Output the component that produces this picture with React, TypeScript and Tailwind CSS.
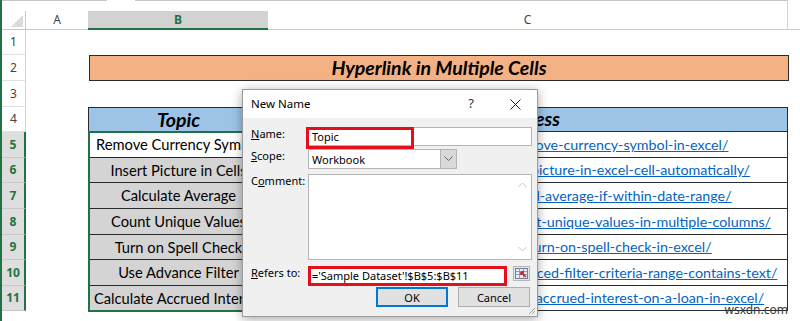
import React from "react";

interface TopicRow {
  n: number;
  topic: string;
  url: string;
  h: string;
}

const topics: TopicRow[] = [
  { n: 5, topic: "Remove Currency Symbol", url: "https://www.exceldemy.com/remove-currency-symbol-in-excel/", h: "h-[26px]" },
  { n: 6, topic: "Insert Picture in Cells", url: "https://www.exceldemy.com/insert-picture-in-excel-cell-automatically/", h: "h-[25px]" },
  { n: 7, topic: "Calculate Average", url: "https://www.exceldemy.com/excel-average-if-within-date-range/", h: "h-[26px]" },
  { n: 8, topic: "Count Unique Values", url: "https://www.exceldemy.com/excel-count-unique-values-in-multiple-columns/", h: "h-[26px]" },
  { n: 9, topic: "Turn on Spell Check", url: "https://www.exceldemy.com/turn-on-spell-check-in-excel/", h: "h-[25px]" },
  { n: 10, topic: "Use Advance Filter", url: "https://www.exceldemy.com/excel-advanced-filter-criteria-range-contains-text/", h: "h-[26px]" },
  { n: 11, topic: "Calculate Accrued Interest", url: "https://www.exceldemy.com/calculate-accrued-interest-on-a-loan-in-excel/", h: "h-[25px]" },
];

function RowHead({ n, active }: { n: number; active?: boolean }) {
  return active ? (
    <div className="w-[24px] shrink-0 flex items-center justify-center bg-[#dedede] border-r-2 border-[#217346] border-b border-b-[#c8c8c8] text-[12px] font-bold text-[#217346] font-['Noto_Sans',sans-serif]">
      {n}
    </div>
  ) : (
    <div className="w-[24px] shrink-0 flex items-center justify-center bg-white border-r border-[#d4d4d4] border-b border-b-[#e1e1e1] text-[12px] text-[#444] font-['Noto_Sans',sans-serif]">
      {n}
    </div>
  );
}

function Sheet() {
  return (
    <div className="flex flex-col flex-1 font-['Lato',sans-serif]">
      {/* formula bar edge */}
      <div className="h-[11px] flex">
        <div className="w-[105px] border-t border-[#c6c6c6]" />
        <div className="w-[28px]" />
        <div className="w-[653px] border-t border-[#c6c6c6] border-r border-r-[#d4d4d4]" />
      </div>

      {/* column headers */}
      <div className="h-[19px] flex text-[12px] font-['Noto_Sans',sans-serif] text-[#444]">
        <div className="w-[24px] relative bg-white border-r border-b border-[#c8c8c8]">
          <svg className="absolute right-[2px] bottom-[2px]" width="12" height="12" viewBox="0 0 12 12">
            <polygon points="12,0 12,12 0,12" fill="#dadada" />
          </svg>
        </div>
        <div className="w-[62px] flex items-center justify-center bg-white border-b border-[#c8c8c8]">A</div>
        <div className="w-[180px] flex items-center justify-center bg-[#d2d2d2] border-b-2 border-[#217346] font-bold text-[#217346]">B</div>
        <div className="w-[520px] flex items-center justify-center bg-white border-b border-[#c8c8c8] border-r border-r-[#d4d4d4]">C</div>
        <div className="flex-1 bg-white border-b border-[#c8c8c8]" />
      </div>

      {/* row 1 */}
      <div className="h-[25px] flex">
        <RowHead n={1} />
      </div>

      {/* row 2 */}
      <div className="h-[26px] flex">
        <RowHead n={2} />
        <div className="w-[63px]" />
        <div className="w-[700px] flex items-center justify-center bg-[#f4b183] border border-[#2a2a2a] text-[19.5px] font-bold italic text-black">
          Hyperlink in Multiple Cells
        </div>
      </div>

      {/* row 3 */}
      <div className="h-[26px] flex">
        <RowHead n={3} />
      </div>

      {/* row 4 */}
      <div className="h-[25px] flex">
        <RowHead n={4} />
        <div className="w-[62px]" />
        <div className="w-[181px] flex items-center justify-center bg-[#9dc3e6] border border-[#2a2a2a] text-[19.5px] font-bold italic text-black">
          Topic
        </div>
        <div className="w-[519px] flex items-center justify-center bg-[#9dc3e6] border-y border-r border-[#2a2a2a] text-[19px] font-bold italic text-black">
          Address
        </div>
      </div>

      {topics.map((r, i) => (
        <div key={r.n} className={`${r.h} flex`}>
          <RowHead n={r.n} active />
          <div className="w-[62px]" />
          <div
            className={`w-[181px] flex items-center justify-center overflow-hidden whitespace-nowrap border-x border-b border-[#2a2a2a] text-[14.7px] text-black ${
              i === 0 ? "bg-white" : "bg-[#d4d4d4]"
            }`}
          >
            {r.topic}
          </div>
          <div className="w-[519px] flex items-center justify-center overflow-hidden whitespace-nowrap bg-white border-r border-b border-[#2a2a2a] text-[14.3px] text-[#0563c1] underline">
            {r.url}
          </div>
        </div>
      ))}
    </div>
  );
}

function NewNameDialog() {
  return (
    <div className="absolute left-[242px] top-[89px] w-[296px] h-[228px] flex flex-col bg-[#f0f0f0] border border-[#9a9a9a] shadow-[0_2px_10px_rgba(0,0,0,0.35)] font-['Noto_Sans',sans-serif] text-[11px] text-black">
      <div className="h-[28px] shrink-0 flex items-center bg-white pl-[8px] pr-[16px]">
        <span className="text-[11.5px]">New Name</span>
        <span className="ml-auto mr-[36px] text-[13px] text-[#333]">?</span>
        <svg width="11" height="11" viewBox="0 0 11 11">
          <path d="M0.5 0.5 L10.5 10.5 M10.5 0.5 L0.5 10.5" stroke="#222" strokeWidth="1" />
        </svg>
      </div>

      <div className="flex-1 relative pl-[8px] pr-[5px] pt-[9px] grid grid-cols-[57px_1fr] auto-rows-min leading-[13px]">
        {/* Name */}
        <div>
          <span className="underline">N</span>ame:
        </div>
        <div className="relative h-[19px] mb-[3px] bg-white border border-[#b5b5b5] flex items-center pl-[3px]">
          Topic
          <div className="absolute left-[-3px] top-[-1px] w-[108px] h-[22px] border-[3px] border-[#e3101c]" />
        </div>

        {/* Scope */}
        <div>
          <span className="underline">S</span>cope:
        </div>
        <div className="w-[149px] h-[20px] mb-[5px] flex bg-white border border-[#b5b5b5]">
          <div className="flex-1 flex items-center pl-[3px]">Workbook</div>
          <div className="w-[16px] flex items-center justify-center bg-[#d9d9d9] border-l border-[#b5b5b5]">
            <svg width="9" height="6" viewBox="0 0 9 6">
              <path d="M0.5 0.5 L4.5 4.5 L8.5 0.5" fill="none" stroke="#666" strokeWidth="1" />
            </svg>
          </div>
        </div>

        {/* Comment */}
        <div>
          C<span className="underline">o</span>mment:
        </div>
        <div className="h-[86px] mb-[6px] flex bg-white border border-[#b5b5b5]">
          <div className="flex-1" />
          <div className="w-[17px] flex flex-col items-center justify-between py-[7px]">
            <svg width="9" height="6" viewBox="0 0 9 6">
              <path d="M0.5 5 L4.5 1 L8.5 5" fill="none" stroke="#c4c4c4" strokeWidth="1" />
            </svg>
            <svg width="9" height="6" viewBox="0 0 9 6">
              <path d="M0.5 1 L4.5 5 L8.5 1" fill="none" stroke="#c4c4c4" strokeWidth="1" />
            </svg>
          </div>
        </div>

        {/* Refers to */}
        <div>
          <span className="underline">R</span>efers to:
        </div>
        <div className="h-[19px] mb-[2px] flex items-start">
          <div className="relative w-[199px] h-[19px] bg-white border border-[#b5b5b5] flex items-center pl-[3px] whitespace-nowrap">
            ='Sample Dataset'!$B$5:$B$11
            <div className="absolute left-[-1px] top-[-1px] w-[199px] h-[20px] border-[3px] border-[#e3101c]" />
          </div>
          <div className="ml-[6px] w-[17px] h-[15px] flex items-center justify-center bg-[#e6e6e6] border border-[#b5b5b5]">
            <svg width="13" height="11" viewBox="0 0 13 11">
              <rect x="0.5" y="0.5" width="12" height="10" fill="#e8eef6" stroke="#6d7f99" />
              <path d="M0.5 3.5 H12.5 M0.5 6.5 H12.5 M4.5 0.5 V10.5 M8.5 0.5 V10.5" stroke="#8aa0bf" strokeWidth="1" />
              <path d="M11 9 L6 4 M6 4 V7 M6 4 H9" fill="none" stroke="#d4201c" strokeWidth="1.6" />
            </svg>
          </div>
        </div>

        {/* Buttons */}
        <div />
        <div className="h-[20px] flex justify-end gap-[10px] pr-[2px]">
          <div className="w-[72px] flex items-center justify-center bg-[#e1e1e1] border-2 border-[#0078d7]">OK</div>
          <div className="w-[72px] flex items-center justify-center bg-[#e1e1e1] border border-[#adadad]">Cancel</div>
        </div>

        <svg className="absolute right-[1px] bottom-[1px]" width="9" height="9" viewBox="0 0 9 9">
          <path d="M8 2 L2 8 M8 5 L5 8" stroke="#a0a0a0" strokeWidth="1" />
        </svg>
      </div>
    </div>
  );
}

export default function App() {
  return (
    <div className="relative w-[800px] h-[321px] overflow-hidden flex bg-white">
      <div className="w-[2px] shrink-0 bg-[#217346]" />
      <Sheet />

      {/* selection border on B5:B11 */}
      <div className="absolute left-[88px] top-[131px] w-[182px] h-[181px] border-2 border-[#217346] pointer-events-none" />

      <NewNameDialog />

      <div className="absolute right-[12px] bottom-[5px] text-[12px] leading-[12px] text-[#3a3a3a] font-['Noto_Sans',sans-serif]">
        wsxdn.com
      </div>
    </div>
  );
}
